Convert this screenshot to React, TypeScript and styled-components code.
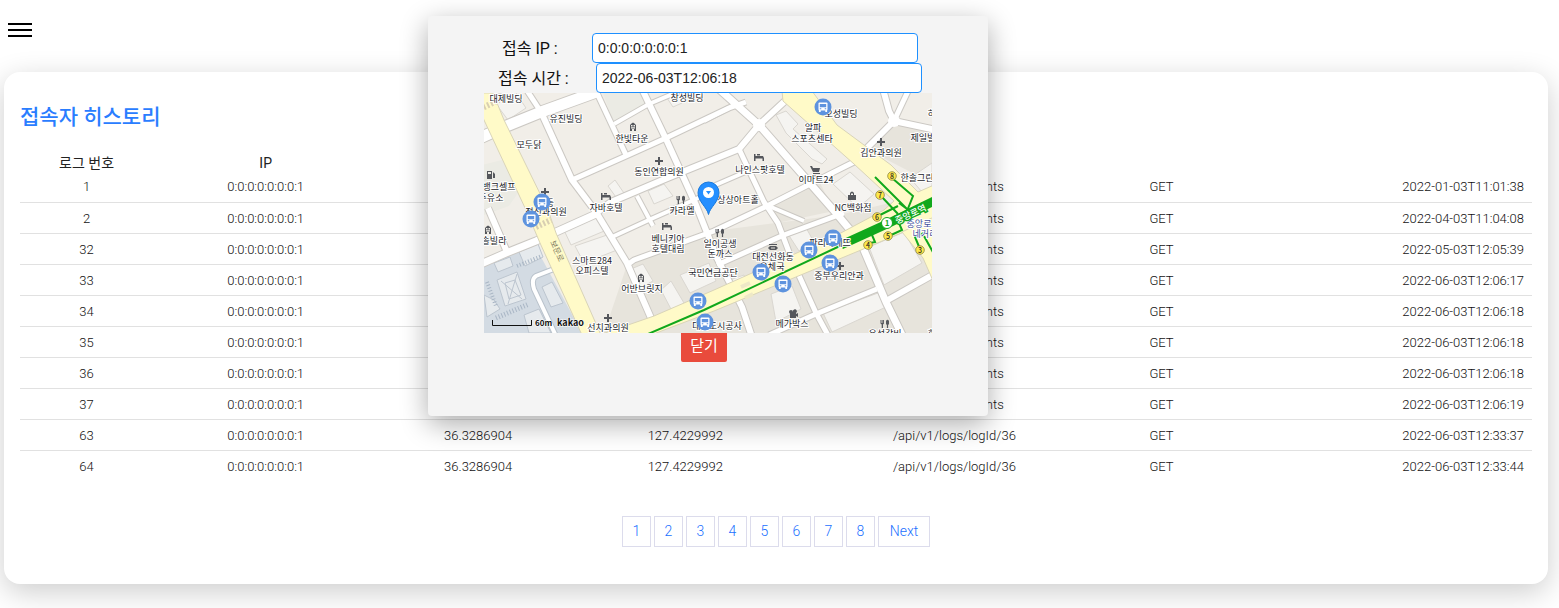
import React from "react";
import styled, { createGlobalStyle } from "styled-components";

const GlobalStyle = createGlobalStyle`
  *, *::before, *::after { box-sizing: border-box; }
  body {
    margin: 0;
    background: #fff;
    color: #111;
    font-family: Roboto, "Noto Sans CJK KR", sans-serif;
  }
`;

const Page = styled.div`
  position: relative;
  overflow: hidden;
  padding-bottom: 24px;
`;

const TopBar = styled.header`
  display: flex;
  align-items: flex-start;
  height: 72px;
  padding: 18px 8px;
`;

const MenuButton = styled.button`
  display: flex;
  padding: 0;
  border: 0;
  background: none;
  cursor: pointer;
`;

const Card = styled.main`
  margin: 0 11px 0 4px;
  padding: 30px 16px 37px;
  border-radius: 16px;
  background: #fff;
  box-shadow: 0 8px 30px rgba(0, 0, 0, 0.2);
`;

const Title = styled.h1`
  margin: 0 0 24px;
  color: #2a7dff;
  font-size: 21px;
  font-weight: 500;
  line-height: 30px;
`;

const LogTable = styled.table`
  width: 100%;
  table-layout: fixed;
  border-collapse: collapse;
  font-size: 13px;
`;

const HeadCell = styled.th<{ $width: string }>`
  width: ${(p) => p.$width};
  height: 15px;
  padding: 0;
  color: #222;
  font-size: 14px;
  font-weight: 400;
  line-height: 15px;
`;

const Row = styled.tr`
  & + & { border-top: 1px solid #e1e1e1; }
`;

const Cell = styled.td<{ $end?: boolean }>`
  height: 31px;
  padding: 2px ${(p) => (p.$end ? "8px" : "0")} 0 0;
  color: #111;
  font-weight: 300;
  line-height: 28px;
  text-align: ${(p) => (p.$end ? "right" : "center")};
`;

const Pagination = styled.nav`
  display: flex;
  justify-content: center;
  gap: 3px;
  margin-top: 35px;
`;

const PageLink = styled.a<{ $wide?: boolean }>`
  width: ${(p) => (p.$wide ? "52px" : "29px")};
  height: 31px;
  border: 1px solid #dcdcec;
  color: #1a70ff;
  font-size: 14px;
  font-weight: 300;
  line-height: 29px;
  text-align: center;
  text-decoration: none;
`;

const Overlay = styled.div`
  position: absolute;
  top: 16px;
  left: 0;
  right: 143px;
  display: flex;
  justify-content: center;
`;

const Dialog = styled.section`
  display: flex;
  flex-direction: column;
  align-items: center;
  width: 560px;
  height: 400px;
  padding-top: 17px;
  border-radius: 4px;
  background: #f4f4f4;
  box-shadow: 0 8px 28px rgba(0, 0, 0, 0.33);
`;

const Field = styled.div`
  display: flex;
  align-items: center;
  padding-left: 4px;
`;

const FieldLabel = styled.label<{ $width: number }>`
  width: ${(p) => p.$width}px;
  padding-top: 2px;
  font-size: 16px;
  font-weight: 400;
  line-height: 28px;
`;

const FieldInput = styled.input`
  width: 326px;
  height: 30px;
  padding: 0 5px;
  border: 1px solid #1e90ff;
  border-radius: 4px;
  background: #fff;
  color: #222;
  font-family: "Liberation Sans", sans-serif;
  font-size: 14px;
`;

const MapSvg = styled.svg`
  display: block;
  width: 448px;
  height: 240px;
  font-family: "Noto Sans CJK KR", sans-serif;
`;

const CloseButton = styled.button`
  width: 46px;
  height: 29px;
  margin-right: 8px;
  padding: 0 0 6px;
  border: 0;
  border-radius: 0 0 2px 2px;
  background: #e94b3c;
  color: #fff;
  font-family: "Noto Sans CJK KR", sans-serif;
  font-size: 15px;
  line-height: 16px;
  cursor: pointer;
`;

const headers = [
  ["로그 번호", "8.8%"],
  ["IP", "14.9%"],
  ["위도", "13.2%"],
  ["경도", "14.2%"],
  ["URL", "21.4%"],
  ["", "6%"],
  ["", "21.5%"],
];

const accounts = "/api/v1/accounts";
const logs = "/api/v1/logs/logId/36";
const rows: [number, string, string][] = [
  [1, accounts, "2022-01-03T11:01:38"],
  [2, accounts, "2022-04-03T11:04:08"],
  [32, accounts, "2022-05-03T12:05:39"],
  [33, accounts, "2022-06-03T12:06:17"],
  [34, accounts, "2022-06-03T12:06:18"],
  [35, accounts, "2022-06-03T12:06:18"],
  [36, accounts, "2022-06-03T12:06:18"],
  [37, accounts, "2022-06-03T12:06:19"],
  [63, logs, "2022-06-03T12:33:37"],
  [64, logs, "2022-06-03T12:33:44"],
];

const pages = ["1", "2", "3", "4", "5", "6", "7", "8", "Next"];

const streets: [string, number][] = [
  ["M-4 45 L20 34 L57 19 L115 -2", 11],
  ["M42 -4 L57 19", 5],
  ["M57 19 L88 87 L112 119 L143 170 L170 232", 6],
  ["M112 -2 L142 62", 5],
  ["M88 87 L142 63 L182 45 L245 15 L262 9", 5],
  ["M130 31 L165 11 L198 -3", 4],
  ["M158 -4 L182 46 L212 112 L233 165 L258 214 L268 244", 6],
  ["M112 120 L127 109 L181 86 L255 56 L275 32 L301 8", 6],
  ["M-3 171 L22 160 L52 148 L112 121", 7],
  ["M128 144 L167 126 L230 98", 4],
  ["M153 103 L169 133", 4],
  ["M143 172 L150 167 L230 138 L281 114 L340 84 L370 69", 5],
  ["M233 172 L300 142 L360 120", 5],
  ["M235 -4 L275 32 L352 120 L377 150 L402 209 L419 244", 7],
  ["M220 97 L266 77", 4],
  ["M255 56 L280 109 L294 130 L308 167 L332 220 L345 244", 5],
  ["M280 111 L320 128", 4],
  ["M220 28 L252 11", 4],
  ["M399 -4 L405 18 L410 28 L382 56", 6],
  ["M410 28 L425 -4", 5],
  ["M410 28 L452 37", 6],
  ["M402 208 L452 180", 6],
  ["M285 242 L332 221 L393 196", 5],
  ["M4 115 L23 159", 6],
];

const buildings = [
  "292,22 302,18 314,31 309,36 343,66 338,71 328,66 302,40",
  "124,93 131,87 142,103 134,107",
  "79,135 116,123 125,136 87,152",
  "91,153 126,141 133,157 100,170",
  "164,98 180,91 189,103 170,111",
  "147,176 159,171 169,188 154,196",
  "177,197 187,188 200,210 188,218",
  "196,182 225,170 232,188 206,200",
  "304,141 321,133 330,149 315,158",
  "287,201 308,193 317,216 292,229",
  "339,220 394,200 402,214 348,239",
  "385,154 420,139 438,170 400,192",
  "349,91 366,79 390,101 374,115",
  "183,5 195,2 198,10 189,14",
  "243,188 260,182 265,195 251,204",
];

const labels: [string, number, number][] = [
  ["대제빌딩", 22, 9], ["유진빌딩", 82, 29], ["모두닭", 45, 55],
  ["한빛타운", 148, 49], ["동인연합의원", 175, 82], ["창성빌딩", 203, 8],
  ["뱅크셀프", 15, 97], ["주유소", 7, 108], ["동", 66, 113],
  ["정신과의원", 62, 122], ["자바호텔", 122, 118], ["카라멜", 198, 121],
  ["상상아트홀", 254, 110], ["나인스팟호텔", 276, 80], ["이마트24", 332, 90],
  ["NC백화점", 369, 118], ["알파", 329, 38], ["스포츠센타", 328, 49],
  ["오성빌딩", 357, 24], ["김안과의원", 397, 63], ["제일빌딩", 443, 48],
  ["하나", 452, 24], ["한솔그린", 433, 88], ["솔빌라", 10, 151],
  ["스마트284", 108, 171], ["오피스텔", 108, 181], ["베니키아", 184, 149],
  ["호텔대림", 184, 159], ["어반브릿지", 158, 199], ["일이공생", 236, 154],
  ["돈까스", 236, 164], ["국민연금공단", 229, 183], ["선치과의원", 124, 238],
  ["대전도시공사", 233, 236], ["메가박스", 308, 234], ["대전선화동", 289, 167],
  ["우체국", 288, 177], ["파리바게뜨", 346, 153], ["중부우리안과", 355, 186],
  ["유성갈비", 401, 244], ["회관", 452, 244],
];

const busStops = [
  [58, 109], [47, 126], [339, 14], [349, 145], [325, 157],
  [346, 170], [277, 179], [299, 191], [214, 208], [221, 229],
];

const crosses = [[61, 99], [175, 68], [397, 49], [124, 225], [356, 173]];
const beds = [[122, 104], [275, 65], [183, 134]];
const forks = [[197, 107], [236, 140], [401, 231]];
const towers = [[149, 34], [4, 137], [157, 185]];
const exits = [[8, 408, 83], [7, 396, 102], [6, 393, 124], [5, 404, 143], [4, 384, 152], [3, 436, 157]];

function LocationMap() {
  return (
    <MapSvg viewBox="0 0 448 240" role="img" aria-label="접속 위치 지도">
      <rect width="448" height="240" fill="#f1eee8" />
      <g fill="#e7e4dc">
        <path d="M143 172 L230 138 L355 122 L448 100 V240 H120Z" />
        <path d="M280 111 L334 86 L350 118 L293 130Z M382 56 L410 28 L448 36 V90Z" />
      </g>
      <path d="M119 0 H158 L164 10 L130 31Z M-2 72 L18 67 L34 100 L25 113 L0 122Z" fill="#ebebe4" />
      <g fill="#f5f4f1" stroke="#dad7d1">
        {buildings.map((b) => <polygon key={b} points={b} />)}
        <path d="M6 3 L30 -3 L42 15 L24 27Z M426 85 L448 70 V102 L438 99Z" />
      </g>
      <path d="M0 173 L50 151 L98 240 H0Z" fill="#d3dbe3" />
      <g fill="#e6eaed" stroke="#bcc5cf">
        <path d="M13 187 L33 179 L42 206 L21 213Z M35 159 L54 151 L59 164 L41 173Z M10 170 L26 164 L29 173 L14 179Z M0 202 L10 207 L16 216 L3 224Z M40 222 L55 216 L67 240 H45Z M58 194 L68 189 L79 210 L67 214Z" />
        <path d="M17 188 L38 206 M33 181 L24 211 M21 190 L31 187 L37 202 L25 206Z" fill="none" />
      </g>
      <g fill="none" stroke="#a9b6c5">
        <path d="M12 225 L45 211" strokeWidth="5" strokeDasharray="1 2" />
        <path d="M33 173 L58 163 M3 189 L12 213" strokeWidth="4" strokeDasharray="1 2" />
      </g>
      <path d="M70 176 L52 183 Q47 186 50 196 L72 243" fill="none" stroke="#bac3cc" strokeWidth="6" />
      <path d="M70 176 L52 183 Q47 186 50 196 L72 243" fill="none" stroke="#fff" strokeWidth="4" />

      <g fill="none" stroke="#cbc8c3" strokeLinejoin="round">
        {streets.map(([d, w]) => <path key={d} d={d} strokeWidth={w + 2} />)}
      </g>
      <g fill="none" stroke="#fff" strokeLinejoin="round">
        {streets.map(([d, w]) => <path key={d} d={d} strokeWidth={w} />)}
      </g>
      <circle cx="275" cy="32" r="6" fill="#fff" />
      <circle cx="410" cy="28" r="6" fill="#fff" />

      <g fill="#fffac8" stroke="#d9d4b8">
        <path d="M-12 0 L0 27 L42 117 L56 150 L98 242 H117 L72 140 L64 117 L20 27 L9 0Z" />
        <path d="M298 -2 L328 -2 L353 32 L407 72 L434 99 L450 92 V126 L417 140 L377 157 L230 218 L167 242 H115 L170 223 L230 197 L353 142 L400 117 L410 108 L370 71 L299 8Z" />
        <path d="M418 139 L428 134 L450 124 V190 L439 165Z" />
      </g>
      <path d="M52 134 L67 127 M-4 16 L15 7" stroke="#d8ceb2" strokeWidth="6" strokeDasharray="2 2" />
      <path d="M257 194 L266 190 M261 205 L269 201" stroke="#eee8c7" strokeWidth="4" />

      <g fill="none" stroke="#11a81c">
        <path d="M164 241 L220 217 L358 152" strokeWidth="2" />
        <path d="M357 152 L403 131 L450 108" strokeWidth="9" />
        <path d="M408 85 L429 103 L423 118 M391 84 L423 116 L415 110 M397 103 L414 121 M394 123 L414 113 M405 143 L418 137 L414 128 M386 150 L391 149 L388 142 M436 156 L431 144 L440 140 M440 143 L450 161" strokeWidth="2" />
      </g>

      <text transform="translate(66 149) rotate(66)" fontSize="8" fill="#817b61">보문로</text>

      <g fill="#55575c" stroke="none">
        {crosses.map(([x, y]) => (
          <path key={x} transform={`translate(${x} ${y})`} d="M-1 -4 H1 V-1 H4 V1 H1 V4 H-1 V1 H-4 V-1 H-1Z" />
        ))}
        {beds.map(([x, y]) => (
          <path key={x} transform={`translate(${x} ${y})`} d="M-5 -4 H-3.5 V-2 H4 L5 0 V3 H3.5 V0.5 H-3.5 V3 H-5Z M-2 -4 H1 V-2.5 H-2Z" />
        ))}
        {forks.map(([x, y]) => (
          <path key={x} transform={`translate(${x} ${y})`} d="M-4.5 -4 H-3.7 V-1 H-3.2 V-4 H-2.4 V-1 H-1.9 V-4 H-1 V-0.5 L-2 0.5 V4 H-3.3 V0.5 L-4.5 -0.5Z M1 -3 Q2.5 -5.5 4 -3 V0 L3.1 1 V4 H1.9 V1 L1 0Z" />
        ))}
        {towers.map(([x, y]) => (
          <path key={x} transform={`translate(${x} ${y})`} fillRule="evenodd" d="M-3 4 V-2 L-1.5 -3.5 L0 -4.5 L1.5 -3.5 L3 -2 V4 H1 V2 H-1 V4Z M-2 -2 V-0.5 H-0.5 V-2Z M0.5 -2 V-0.5 H2 V-2Z M-2 0.3 V1.5 H2 V0.3Z" />
        ))}
        <path fillRule="evenodd" d="M3 78 H8 V86 H3Z M4 79 V81 H7 V79Z M9 79 L11 81 V85 H9 V83Z" />
        <path d="M326 73 H328 L329 75 H336 L335 79 H329Z M329 80 H336 V81 H329Z M330 82 h1.5 v1.5 h-1.5Z M334 82 h1.5 v1.5 h-1.5Z" />
        <path fillRule="evenodd" d="M364 102 H366 V100 Q368 97 370 100 V102 H372 V107 H364Z M367 102 H369 V100.5 H367Z" />
        <path fillRule="evenodd" d="M285 151 H293 V152 H285Z M286 153 H292 L294 155 L292 157 H286 L284 155Z M287 154.5 V155.5 H291 V154.5Z" />
        <path d="M305 219 a2 2 0 1 1 4 0 a2 2 0 1 1 3 1 V221 L314 220 V224 L312 223 V225 H306 V221Z" />
      </g>

      <g fontSize="9" fontWeight="400" textAnchor="middle" fill="#222328" stroke="#fff" strokeWidth="2" strokeLinejoin="round" paintOrder="stroke">
        {labels.map(([text, x, y]) => <text key={text} x={x} y={y}>{text}</text>)}
        <text x="435" y="134" fill="#43519b">중앙로</text>
        <text x="441" y="144" fill="#43519b">네거리</text>
      </g>

      {busStops.map(([x, y]) => (
        <g key={`${x}-${y}`} transform={`translate(${x} ${y})`}>
          <circle r="8.5" fill="#5e93de" />
          <rect x="-4.5" y="-4.5" width="9" height="8" rx="1" fill="#fff" />
          <path d="M-3.2 -3 H3.2 V0.2 H-3.2Z M-3.2 1.2 h1.5 v1.1 h-1.5Z M1.7 1.2 h1.5 v1.1 h-1.5Z" fill="#5e93de" />
          <path d="M-3.2 3 V5 M3.2 3 V5" stroke="#fff" strokeWidth="1.8" />
        </g>
      ))}

      {exits.map(([n, x, y]) => (
        <g key={n}>
          <circle cx={x} cy={y} r="4.3" fill="#ffe84a" stroke="#8c8540" strokeWidth="0.8" />
          <text x={x} y={y + 2.500} textAnchor="middle" fontSize="7" fontWeight="500" fill="#222">{n}</text>
        </g>
      ))}
      <circle cx="403" cy="130" r="5.5" fill="#fff" stroke="#11a81c" />
      <text x="403" y="133" textAnchor="middle" fontSize="8" fontWeight="700" fill="#11a81c">1</text>
      <text transform="translate(413 131) rotate(-25)" fontSize="9" fontWeight="500" fill="#fff" stroke="#11a81c" strokeWidth="3" paintOrder="stroke">중앙로역</text>

      <path d="M224.500 121.500 C223 114 214 109 214 99.500 A10.500 10.500 0 1 1 235 99.500 C235 109 226 114 224.500 121.500Z" fill="#258fff" stroke="#1878db" />
      <circle cx="224.500" cy="99.500" r="5.500" fill="#fff" />
      <path d="M222 98 H227 L224.500 101.500Z" fill="#258fff" />

      <path d="M8.500 227 V232.500 H47.500 V227" fill="none" stroke="#111" />
      <g fill="#111" stroke="#fff" strokeWidth="1" paintOrder="stroke" fontWeight="700">
        <text x="51" y="233" fontSize="8">60m</text>
        <text x="73" y="233" fontSize="9">kakao</text>
      </g>
    </MapSvg>
  );
}

export default function App() {
  return (
    <>
      <GlobalStyle />
      <Page>
        <TopBar>
          <MenuButton type="button" aria-label="메뉴">
            <svg width="24" height="24" viewBox="0 0 24 24">
              <path d="M0 5 H24 V7 H0Z M0 11 H24 V13 H0Z M0 17 H24 V19 H0Z" />
            </svg>
          </MenuButton>
        </TopBar>
        <Card>
          <Title>접속자 히스토리</Title>
          <LogTable>
            <thead>
              <tr>
                {headers.map(([name, width], i) => (
                  <HeadCell key={i} $width={width}>{name}</HeadCell>
                ))}
              </tr>
            </thead>
            <tbody>
              {rows.map(([id, url, time]) => (
                <Row key={id}>
                  <Cell>{id}</Cell>
                  <Cell>0:0:0:0:0:0:0:1</Cell>
                  <Cell>36.3286904</Cell>
                  <Cell>127.4229992</Cell>
                  <Cell>{url}</Cell>
                  <Cell>GET</Cell>
                  <Cell $end>{time}</Cell>
                </Row>
              ))}
            </tbody>
          </LogTable>
          <Pagination aria-label="페이지">
            {pages.map((p) => (
              <PageLink key={p} href={`#page-${p}`} $wide={p === "Next"}>{p}</PageLink>
            ))}
          </Pagination>
        </Card>
        <Overlay>
          <Dialog role="dialog" aria-label="접속 정보">
            <Field>
              <FieldLabel htmlFor="ip" $width={90}>접속 IP :</FieldLabel>
              <FieldInput id="ip" defaultValue="0:0:0:0:0:0:0:1" />
            </Field>
            <Field>
              <FieldLabel htmlFor="time" $width={98}>접속 시간 :</FieldLabel>
              <FieldInput id="time" defaultValue="2022-06-03T12:06:18" />
            </Field>
            <LocationMap />
            <CloseButton type="button">닫기</CloseButton>
          </Dialog>
        </Overlay>
      </Page>
    </>
  );
}
